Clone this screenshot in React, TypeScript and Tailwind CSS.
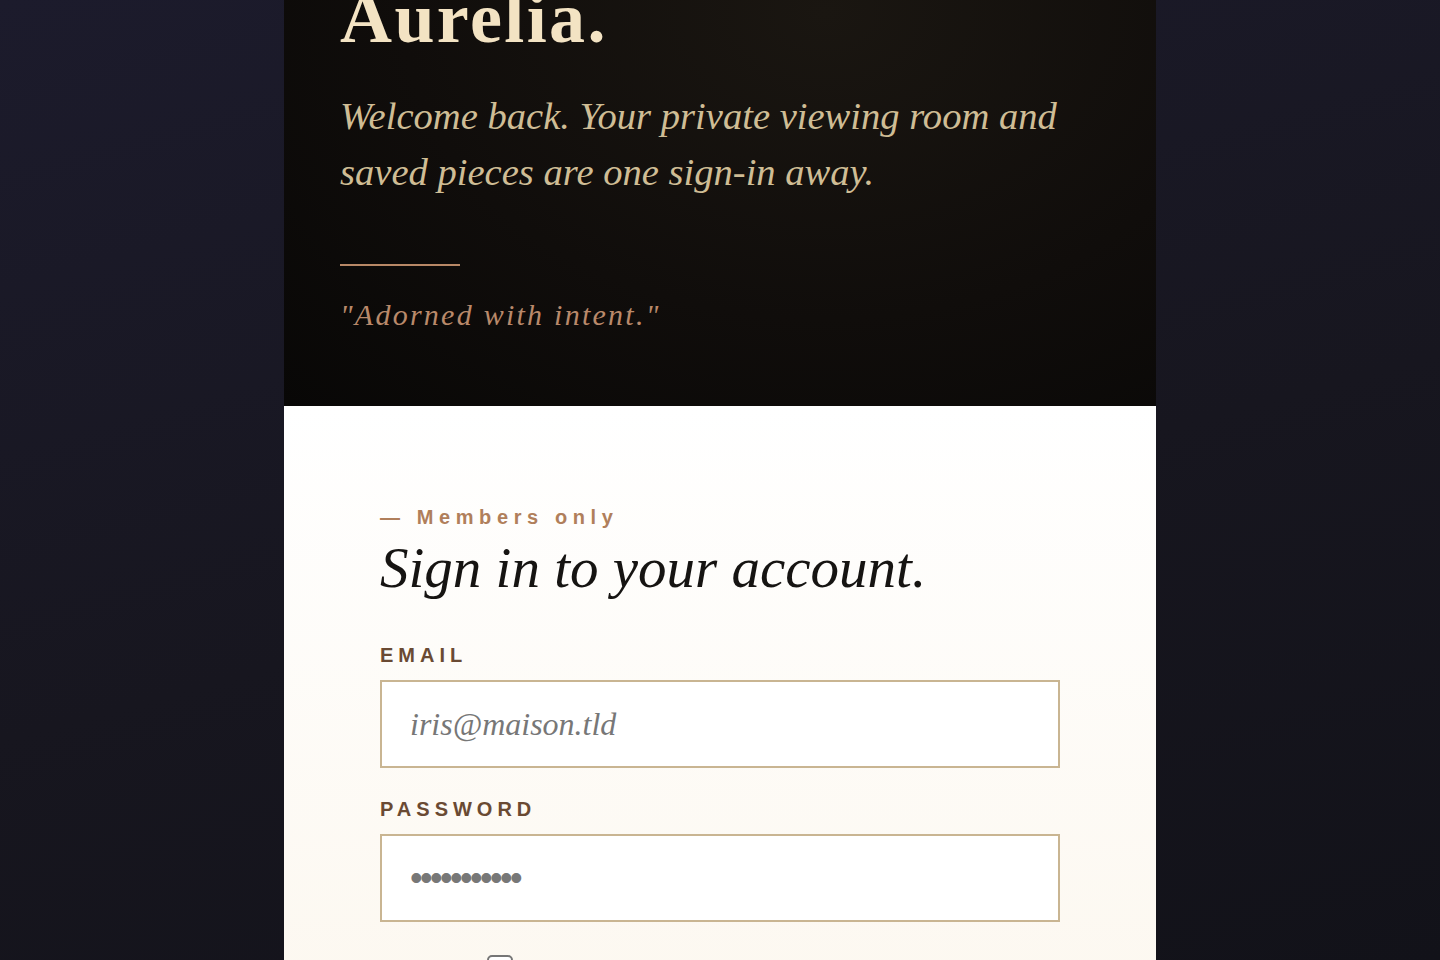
import { useState } from 'react';

export default function App() {
  const [email, setEmail] = useState('');
  const [password, setPassword] = useState('hunter2pass');
  const [remember, setRemember] = useState(false);

  return (
    <div className="h-screen overflow-hidden bg-[linear-gradient(165deg,#1c1b2c_0%,#17161f_55%,#121219_100%)]">
      <div className="mx-auto -mt-[74px] w-[872px]">
        {/* brand panel */}
        <section className="bg-[radial-gradient(ellipse_at_62%_18%,#1a1611_0%,#100d0b_55%,#080706_100%)] px-14 pt-14 pb-[71px]">
          <h1 className="font-['Liberation_Serif',Georgia,serif] text-[72px] leading-none font-bold tracking-[2.4px] text-[#f3e3c3]">
            Aurelia.
          </h1>
          <p className="mt-[34px] max-w-[760px] font-['Liberation_Serif',Georgia,serif] text-[38.6px] leading-[56px] italic text-[#cfbd95]">
            Welcome back. Your private viewing room and saved pieces are one sign-in away.
          </p>
          <div className="mt-[64px] h-[2px] w-[120px] bg-[#b88866]" />
          <p className="mt-[29px] font-['Liberation_Serif',Georgia,serif] text-[30px] leading-[40px] italic tracking-[0.075em] text-[#b9896a]">
            "Adorned with intent."
          </p>
        </section>

        {/* form panel */}
        <section className="bg-gradient-to-b from-white to-[#fcf7ee] px-24 pt-[97px] pb-24">
          <p className="font-['Liberation_Sans',Arial,sans-serif] text-[20px] leading-[28px] font-bold tracking-[0.28em] text-[#b07f5b]">
            — Members only
          </p>
          <h2 className="mt-[5px] font-['Liberation_Serif',Georgia,serif] text-[57px] leading-[64px] italic text-[#161412]">
            Sign in to your account.
          </h2>

          <form className="mt-[41px]" onSubmit={(e) => e.preventDefault()}>
            <label className="block">
              <span className="block font-['Liberation_Sans',Arial,sans-serif] text-[20px] leading-[28px] font-bold tracking-[0.25em] text-[#6a4a33]">
                EMAIL
              </span>
              <input
                type="email"
                value={email}
                onChange={(e) => setEmail(e.target.value)}
                placeholder="iris@maison.tld"
                className="mt-[11px] block h-[88px] w-full border-2 border-[#c9b592] bg-white px-7 font-['Liberation_Serif',Georgia,serif] text-[32px] italic text-[#2a2420] outline-none placeholder:text-[#777777]"
              />
            </label>

            <label className="mt-[27px] block">
              <span className="block font-['Liberation_Sans',Arial,sans-serif] text-[20px] leading-[28px] font-bold tracking-[0.25em] text-[#6a4a33]">
                PASSWORD
              </span>
              <input
                type="password"
                value={password}
                onChange={(e) => setPassword(e.target.value)}
                className="mt-[11px] block h-[88px] w-full border-2 border-[#c9b592] bg-white px-7 font-['Liberation_Sans',Arial,sans-serif] text-[36px] tracking-[-2.6px] text-[#777777] outline-none"
              />
            </label>

            <label className="mt-[33px] flex items-center gap-7 font-['Liberation_Sans',Arial,sans-serif] text-[16px] leading-[24px] text-[#5b4a3c]">
              <span>Remember</span>
              <input
                type="checkbox"
                checked={remember}
                onChange={(e) => setRemember(e.target.checked)}
                className="h-[26px] w-[26px] appearance-none rounded-[5px] border-2 border-[#767676] bg-white"
              />
            </label>
          </form>
        </section>
      </div>
    </div>
  );
}
